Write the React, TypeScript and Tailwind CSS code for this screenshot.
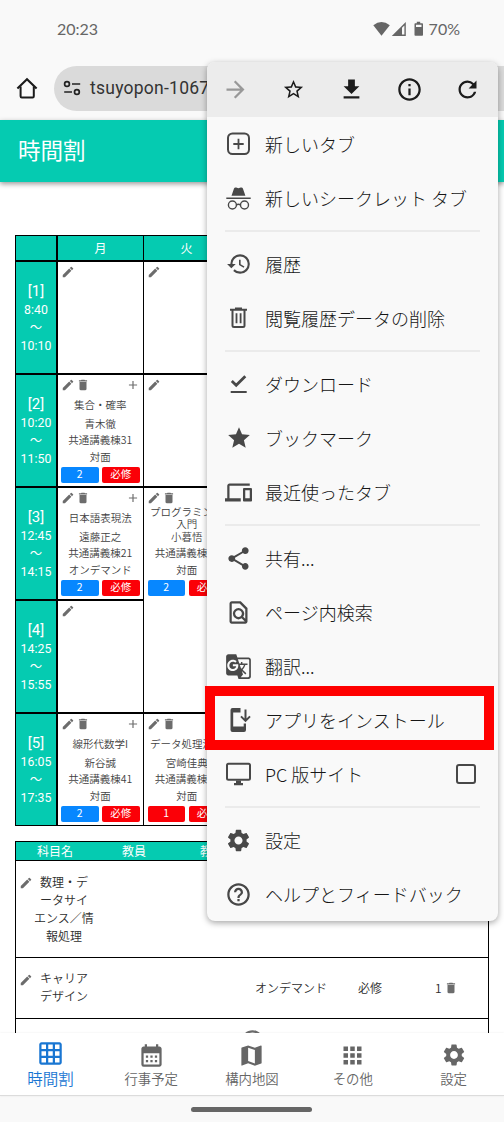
import type { ReactNode } from "react";
import {
  MdAdd,
  MdAddCircleOutline,
  MdApps,
  MdArrowForward,
  MdCalendarMonth,
  MdDelete,
  MdDevices,
  MdEdit,
  MdFileDownload,
  MdGTranslate,
  MdGridOn,
  MdHelpOutline,
  MdHistory,
  MdInfoOutline,
  MdMap,
  MdOutlineFindInPage,
  MdRefresh,
  MdSettings,
  MdShare,
  MdStar,
  MdStarBorder,
} from "react-icons/md";

function Glyph({ children }: { children: ReactNode }) {
  return (
    <svg width="28" height="28" viewBox="0 0 28 28" fill="none" stroke="currentColor" strokeWidth="2">
      {children}
    </svg>
  );
}

const NewTabIcon = () => (
  <Glyph>
    <rect x="3" y="3.5" width="21" height="20.6" rx="4.5" />
    <path d="M13.5 8.8v10.4M8.3 14h10.4" strokeWidth="1.8" />
  </Glyph>
);

const IncognitoIcon = () => (
  <Glyph>
    <path
      d="M6.5 11.7 9 4.6Q9.6 3 11.2 3.5L13.4 4.2 15.7 3.5Q17.3 3 17.9 4.6L20.4 11.7Z"
      fill="currentColor"
      stroke="none"
    />
    <path d="M1.3 14.2H25.7" strokeWidth="1.5" />
    <circle cx="7.4" cy="21" r="4" strokeWidth="1.4" />
    <circle cx="19.5" cy="21" r="4" strokeWidth="1.4" />
    <path d="M11.4 20.8Q13.4 19.6 15.5 20.8" strokeWidth="1.4" />
  </Glyph>
);

const TrashIcon = () => (
  <Glyph>
    <path d="M5 5.8H22M10 4.6H17" />
    <path d="M7.5 6V21.5Q7.5 23 9 23H18Q19.5 23 19.5 21.5V6" />
    <path d="M11.5 9.3V19.3M15.6 9.3V19.3" strokeWidth="1.8" />
  </Glyph>
);

const DoneIcon = () => (
  <Glyph>
    <path d="M6.8 10.9 11.2 15.2 20.3 6.2" strokeWidth="2.8" />
    <path d="M5.7 22H21.7" />
  </Glyph>
);

const InstallIcon = () => (
  <Glyph>
    <path
      d="M7.5 2H15.5V6.5H8.2V20.5H18.7V17.5H21V24Q21 26 19 26H7.5Q5.5 26 5.5 24V4Q5.5 2 7.5 2Z"
      fill="currentColor"
      stroke="none"
    />
    <path d="M20.5 3.5V14.5M16 10.4 20.5 14.9 25 10.4" />
  </Glyph>
);

const DesktopIcon = () => (
  <Glyph>
    <rect x="2" y="3.7" width="23" height="16" rx="1.5" />
    <path d="M11 20.5H16V23H18V25.2H9V23H11Z" fill="currentColor" stroke="none" />
  </Glyph>
);

type Item = { label: string; icon: ReactNode; checkbox?: boolean };

const groups: Item[][] = [
  [
    { label: "新しいタブ", icon: <NewTabIcon /> },
    { label: "新しいシークレット タブ", icon: <IncognitoIcon /> },
  ],
  [
    { label: "履歴", icon: <MdHistory size={26} /> },
    { label: "閲覧履歴データの削除", icon: <TrashIcon /> },
  ],
  [
    { label: "ダウンロード", icon: <DoneIcon /> },
    { label: "ブックマーク", icon: <MdStar size={26} /> },
    { label: "最近使ったタブ", icon: <MdDevices size={27} /> },
  ],
  [
    { label: "共有...", icon: <MdShare size={27} /> },
    { label: "ページ内検索", icon: <MdOutlineFindInPage size={27} /> },
    { label: "翻訳...", icon: <MdGTranslate size={27} /> },
    { label: "アプリをインストール", icon: <InstallIcon /> },
    { label: "PC 版サイト", icon: <DesktopIcon />, checkbox: true },
  ],
  [
    { label: "設定", icon: <MdSettings size={27} /> },
    { label: "ヘルプとフィードバック", icon: <MdHelpOutline size={27} /> },
  ],
];

function StatusBar() {
  return (
    <div className="flex h-[57px] shrink-0 items-center justify-between pl-[57px] pr-[44px] font-['Lato',sans-serif] text-[16px] font-normal text-[#666]">
      <span>20:23</span>
      <div className="flex items-center">
        <svg className="-ml-[1px]" width="50" height="16" viewBox="0 0 50 16" fill="currentColor">
          <path d="M.3 4.2Q8.5-2.2 16.8 4.2L8.5 14.8Z" />
          <path fillRule="evenodd" d="M32.8 1V15H18.8ZM31.4 4.5 29 6.8V13.6H31.4Z" />
          <path
            fillRule="evenodd"
            d="M43.8.8H47.2V2.2H49.2Q50 2.2 50 3V14Q50 14.8 49.2 14.8H42.3Q41.5 14.8 41.5 14V3Q41.5 2.2 42.3 2.2H43.8ZM43 3.7V6H48.5V3.7Z"
          />
        </svg>
        <span className="ml-[6px]">70%</span>
      </div>
    </div>
  );
}

function AddressBar() {
  return (
    <div className="flex h-[63px] shrink-0 items-center pl-[15px] pb-[1px]">
      <svg width="24" height="24" viewBox="0 0 24 24" fill="none" stroke="#1b1b1b" strokeWidth="2">
        <path d="M2.4 12.6 12 3.2 21.6 12.6" strokeWidth="2.1" />
        <path d="M5.6 10.5V20.2Q5.6 21.4 6.8 21.4H17.6Q18.8 21.4 18.8 20.2V10.5" />
      </svg>
      <div className="ml-[15px] flex h-[45px] flex-1 items-center rounded-l-full bg-[#dadada] pl-[9px]">
        <svg width="18" height="16" viewBox="0 0 18 16" fill="none" stroke="#222" strokeWidth="1.7">
          <circle cx="4" cy="4" r="2.4" />
          <path d="M9 4H17.2M1.2 12H9" />
          <circle cx="13.9" cy="12" r="2.4" />
        </svg>
        <span className="ml-[9px] font-['Roboto',sans-serif] text-[17.5px] font-normal tracking-[0.25px] text-[#333]">
          tsuyopon-1067
        </span>
      </div>
    </div>
  );
}

type Course = {
  title: string[];
  teacher: string;
  room: string;
  mode: string;
  credits: string;
  red?: boolean;
};

function Cell({ course }: { course?: Course }) {
  return (
    <div className="flex h-full w-[85px] flex-col pl-[3px] pr-[3.5px] pt-[3px] text-[10.5px] text-[#3f3f3f]">
      <div className="-ml-[0.5px] flex h-[14px] items-center gap-[1px] text-[#6c6c6c]">
        <MdEdit size={14} />
        {course && (
          <>
            <MdDelete size={14} />
            <MdAdd size={14} className="ml-auto" />
          </>
        )}
      </div>
      {course && (
        <>
          <div className="flex h-[25px] flex-col items-center justify-center whitespace-nowrap text-center leading-[12px]">
            {course.title.map((t) => (
              <span key={t}>{t}</span>
            ))}
          </div>
          <div className="-mt-[1px] whitespace-nowrap text-center leading-[16.4px]">
            <div>{course.teacher}</div>
            <div>{course.room}</div>
            <div>{course.mode}</div>
          </div>
          <div className="mt-[2px] grid grid-cols-2 gap-[3.5px] text-center font-normal leading-[14px] text-white">
            <span className={course.red ? "h-4 rounded-[2px] bg-[#fb0007]" : "h-4 rounded-[2px] bg-[#0787ff]"}>
              {course.credits}
            </span>
            <span className="h-4 rounded-[2px] bg-[#fb0007]">必修</span>
          </div>
        </>
      )}
    </div>
  );
}

const periods = [
  { n: "[1]", from: "8:40", to: "10:10" },
  { n: "[2]", from: "10:20", to: "11:50" },
  { n: "[3]", from: "12:45", to: "14:15" },
  { n: "[4]", from: "14:25", to: "15:55" },
  { n: "[5]", from: "16:05", to: "17:35" },
];

const monday: (Course | undefined)[] = [
  undefined,
  { title: ["集合・確率"], teacher: "青木徹", room: "共通講義棟31", mode: "対面", credits: "2" },
  { title: ["日本語表現法"], teacher: "遠藤正之", room: "共通講義棟21", mode: "オンデマンド", credits: "2" },
  undefined,
  { title: ["線形代数学I"], teacher: "新谷誠", room: "共通講義棟41", mode: "対面", credits: "2" },
];

const tuesday: { span: number; course?: Course }[] = [
  { span: 1 },
  { span: 1 },
  {
    span: 2,
    course: { title: ["プログラミング", "入門"], teacher: "小暮悟", room: "共通講義棟31", mode: "対面", credits: "2" },
  },
  {
    span: 1,
    course: { title: ["データ処理演習"], teacher: "宮崎佳典", room: "共通講義棟31", mode: "対面", credits: "1", red: true },
  },
];

function Timetable() {
  return (
    <div className="flex w-[474px] border border-black text-white">
      <div className="w-[42px] border-r-2 border-black bg-[#05cbb1]">
        <div className="h-[26px] border-b-2 border-black" />
        {periods.map((p) => (
          <div
            key={p.n}
            className="flex h-[113px] flex-col items-center border-b-2 border-black pt-[19px] font-['Roboto','Noto_Sans_CJK_JP',sans-serif] text-[12.3px] font-normal leading-[18px] last:h-[111px] last:border-b-0"
          >
            <span className="text-[15px] leading-[20px]">{p.n}</span>
            <span className="tracking-[0.1px]">{p.from}</span>
            <span>〜</span>
            <span className="tracking-[0.1px]">{p.to}</span>
          </div>
        ))}
      </div>
      <div className="w-[86px] border-r border-black">
        <div className="h-[26px] border-b-2 border-black bg-[#05cbb1] text-center text-[12px] font-normal leading-[24px]">
          月
        </div>
        {monday.map((c, i) => (
          <div key={i} className="h-[113px] border-b-2 border-black last:h-[111px] last:border-b-0">
            <Cell course={c} />
          </div>
        ))}
      </div>
      <div className="flex-1">
        <div className="h-[26px] border-b-2 border-black bg-[#05cbb1] pl-[36.5px] text-[12px] font-normal leading-[24px]">
          火
        </div>
        {tuesday.map((c, i) => (
          <div
            key={i}
            className={
              c.span === 2
                ? "h-[226px] border-b-2 border-black pl-[0.5px]"
                : "h-[113px] border-b-2 border-black pl-[0.5px] last:h-[111px] last:border-b-0"
            }
          >
            <Cell course={c.course} />
          </div>
        ))}
      </div>
    </div>
  );
}

function OtherCourses() {
  return (
    <div className="mt-[15px] w-[474px] border border-black text-[12px] leading-[18px] text-[#2e2e2e]">
      <div className="flex h-[19px] border-b border-black bg-[#05cbb1] font-normal text-white">
        <span className="w-[78px] text-center">科目名</span>
        <span className="w-[80px] text-center">教員</span>
        <span className="w-[76px] text-center">教室</span>
      </div>
      <div className="flex h-[97px] border-b border-black pl-[3px]">
        <MdEdit size={14} className="mt-[15px] text-[#6c6c6c]" />
        <div className="ml-[1px] mt-[12px] w-[60px] text-center">
          <div>数理・デ</div>
          <div>ータサイ</div>
          <div>エンス／情</div>
          <div>報処理</div>
        </div>
      </div>
      <div className="flex h-[61px] items-center border-b border-black pl-[3px]">
        <MdEdit size={14} className="mb-[17px] text-[#6c6c6c]" />
        <div className="ml-[1px] w-[60px] pb-[2px] text-center">
          <div>キャリア</div>
          <div>デザイン</div>
        </div>
        <span className="ml-[161px]">オンデマンド</span>
        <span className="ml-[31px]">必修</span>
        <span className="ml-[53px]">1</span>
        <MdDelete size={14} className="ml-[2px] text-[#6c6c6c]" />
      </div>
      <div className="flex h-[60px] justify-center pt-[9px] text-[#6c6c6c]">
        <MdAddCircleOutline size={27} />
      </div>
    </div>
  );
}

const tabs = [
  { label: "行事予定", icon: <MdCalendarMonth size={27} /> },
  { label: "構内地図", icon: <MdMap size={27} /> },
  { label: "その他", icon: <MdApps size={27} /> },
  { label: "設定", icon: <MdSettings size={26} /> },
];

function BottomNav() {
  return (
    <nav className="grid h-[63px] shrink-0 grid-cols-5 border-b border-[#dcdcdc] bg-white text-[#666] shadow-[0_0_2px_rgba(0,0,0,0.08)]">
      <div className="flex flex-col items-center pt-[7px] text-[#1976d2]">
        <MdGridOn size={27} />
        <span className="-mt-[1px] text-[15.5px] leading-[24px]">時間割</span>
      </div>
      {tabs.map((t) => (
        <div key={t.label} className="flex flex-col items-center pt-[8.5px]">
          <span className="flex h-[27px] items-center">{t.icon}</span>
          <span className="-mt-[0.5px] text-[13.4px] leading-[21px]">{t.label}</span>
        </div>
      ))}
    </nav>
  );
}

function BrowserMenu() {
  return (
    <div className="absolute left-[207px] top-[62px] z-10 w-[290.5px] overflow-hidden rounded-[8px] bg-[#f9f9f9] shadow-[0_2px_6px_rgba(0,0,0,0.35)]">
      <div className="grid h-[55px] grid-cols-5 place-items-center bg-[#ececec] pr-[1px] text-[#1c1c1c]">
        <MdArrowForward size={27} className="text-[#989898]" />
        <MdStarBorder size={23} />
        <MdFileDownload size={27} />
        <MdInfoOutline size={27} />
        <MdRefresh size={27} />
      </div>
      {groups.map((items, g) => (
        <div key={g}>
          {g > 0 && <div className="mx-[18px] my-[5px] h-[2px] bg-[#ebebeb]" />}
          {items.map((it) => (
            <div key={it.label} className="flex h-[54px] items-center pl-[17.5px] pr-[21.5px] text-[#161616]">
              <span className="flex w-7 justify-center text-[#484848]">{it.icon}</span>
              <span className="ml-[12.5px] whitespace-nowrap text-[18px] font-light">{it.label}</span>
              {it.checkbox && <span className="ml-auto size-[20px] rounded-[3px] border-2 border-[#484848]" />}
            </div>
          ))}
        </div>
      ))}
    </div>
  );
}

export default function App() {
  return (
    <div className="relative flex h-[1122px] w-[504px] flex-col overflow-hidden bg-[#f9f9f9] font-['Noto_Sans_CJK_JP',sans-serif] font-[350]">
      <StatusBar />
      <AddressBar />
      <header className="z-[1] flex h-[62px] shrink-0 items-center bg-[#05cbb1] pb-[2px] pl-[18px] text-[22.5px] font-normal text-white shadow-[0_2px_5px_rgba(0,0,0,0.4)]">
        時間割
      </header>
      <main className="flex-1 overflow-hidden bg-white pl-[15px] pt-[53px]">
        <Timetable />
        <OtherCourses />
      </main>
      <BottomNav />
      <div className="flex h-[26px] shrink-0 items-center justify-center pr-[1px]">
        <div className="h-[5px] w-[121px] rounded-full bg-[#666]" />
      </div>
      <BrowserMenu />
      <div className="absolute left-[205px] top-[686px] z-20 h-[64px] w-[289px] border-[10px] border-[#ff0000]" />
    </div>
  );
}
